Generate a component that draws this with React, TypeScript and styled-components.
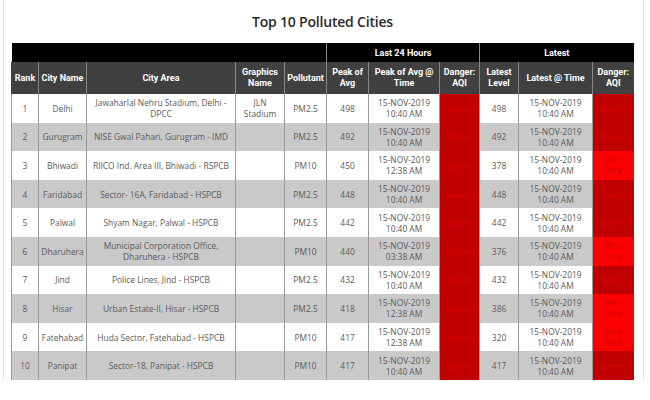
import React from 'react';
import styled, { createGlobalStyle } from 'styled-components';

type Level = 'severe' | 'veryPoor';

interface CityRow {
  rank: number;
  city: string;
  area: string;
  graphics?: string;
  pollutant: string;
  peak: number;
  peakTime: string;
  latest: number;
  latestTime: string;
  latestLevel: Level;
}

const rows: CityRow[] = [
  { rank: 1, city: 'Delhi', area: 'Jawaharlal Nehru Stadium, Delhi - DPCC', graphics: 'JLN Stadium', pollutant: 'PM2.5', peak: 498, peakTime: '10:40 AM', latest: 498, latestTime: '10:40 AM', latestLevel: 'severe' },
  { rank: 2, city: 'Gurugram', area: 'NISE Gwal Pahari, Gurugram - IMD', pollutant: 'PM2.5', peak: 492, peakTime: '10:40 AM', latest: 492, latestTime: '10:40 AM', latestLevel: 'severe' },
  { rank: 3, city: 'Bhiwadi', area: 'RIICO Ind. Area III, Bhiwadi - RSPCB', pollutant: 'PM10', peak: 450, peakTime: '12:38 AM', latest: 378, latestTime: '10:40 AM', latestLevel: 'veryPoor' },
  { rank: 4, city: 'Faridabad', area: 'Sector- 16A, Faridabad - HSPCB', pollutant: 'PM2.5', peak: 448, peakTime: '10:40 AM', latest: 448, latestTime: '10:40 AM', latestLevel: 'severe' },
  { rank: 5, city: 'Palwal', area: 'Shyam Nagar, Palwal - HSPCB', pollutant: 'PM2.5', peak: 442, peakTime: '10:40 AM', latest: 442, latestTime: '10:40 AM', latestLevel: 'severe' },
  { rank: 6, city: 'Dharuhera', area: 'Municipal Corporation Office, Dharuhera - HSPCB', pollutant: 'PM10', peak: 440, peakTime: '03:38 AM', latest: 376, latestTime: '10:40 AM', latestLevel: 'veryPoor' },
  { rank: 7, city: 'Jind', area: 'Police Lines, Jind - HSPCB', pollutant: 'PM2.5', peak: 432, peakTime: '10:40 AM', latest: 432, latestTime: '10:40 AM', latestLevel: 'severe' },
  { rank: 8, city: 'Hisar', area: 'Urban Estate-II, Hisar - HSPCB', pollutant: 'PM2.5', peak: 418, peakTime: '12:38 AM', latest: 386, latestTime: '10:40 AM', latestLevel: 'veryPoor' },
  { rank: 9, city: 'Fatehabad', area: 'Huda Sector, Fatehabad - HSPCB', pollutant: 'PM10', peak: 417, peakTime: '12:38 AM', latest: 320, latestTime: '10:40 AM', latestLevel: 'veryPoor' },
  { rank: 10, city: 'Panipat', area: 'Sector-18, Panipat - HSPCB', pollutant: 'PM10', peak: 417, peakTime: '10:40 AM', latest: 417, latestTime: '10:40 AM', latestLevel: 'severe' },
];

const colWidths = [27, 48, 149, 49, 42, 42, 71, 40, 39, 74, 41];

const GlobalStyle = createGlobalStyle`
  body {
    margin: 0;
    background: #fff;
    font-family: "Open Sans", sans-serif;
  }
`;

const Page = styled.div`
  box-sizing: border-box;
  width: 641px;
  height: 380px;
  margin-left: 3px;
  padding: 0 9px 0 7px;
  border-left: 1px solid #e4e4e4;
  border-right: 1px solid #e4e4e4;
`;

const Title = styled.h2`
  margin: 0;
  height: 43px;
  line-height: 43px;
  text-align: center;
  font-size: 14px;
  font-weight: 600;
  color: #2a2a2a;
  letter-spacing: -0.2px;
`;

const Table = styled.table`
  width: 622px;
  border-collapse: collapse;
  table-layout: fixed;
`;

const GroupRow = styled.tr`
  height: 19px;
  background: #000;
`;

const GroupCell = styled.th<{ $sep?: boolean }>`
  padding: 0;
  color: #fff;
  font-family: "Liberation Sans Narrow", "Roboto", sans-serif;
  font-size: 9px;
  font-weight: 700;
  border-left: ${(p) => (p.$sep ? '1px solid #8a8a8a' : 'none')};
`;

const HeadRow = styled.tr`
  height: 32px;
  background: #404040;
`;

const HeadCell = styled.th`
  padding: 0 1px;
  color: #fff;
  font-family: "Liberation Sans Narrow", "Roboto", sans-serif;
  font-size: 9px;
  line-height: 11px;
  font-weight: 700;
  text-align: center;
  white-space: nowrap;
  border-left: 1px solid #888;
  &:first-child {
    border-left: 1px solid #404040;
  }
`;

const BodyRow = styled.tr<{ $shade: boolean }>`
  height: 28.6px;
  background: ${(p) => (p.$shade ? '#c9c9c9' : '#fff')};
`;

const Cell = styled.td`
  padding: 0 1px;
  color: #5a5a5a;
  font-size: 8.4px;
  line-height: 11px;
  text-align: center;
  vertical-align: middle;
  border-left: 1px solid #999;
`;

const DangerCell = styled.td<{ $level: Level }>`
  padding: 0 1px;
  font-size: 8.4px;
  line-height: 11px;
  text-align: center;
  border-left: 1px solid #999;
  background: ${(p) => (p.$level === 'severe' ? '#c00000' : '#ff0000')};
  color: ${(p) => (p.$level === 'severe' ? '#dc0000' : '#cc0000')};
`;

const levelText: Record<Level, string> = { severe: 'Severe', veryPoor: 'Very Poor' };

export default function App() {
  return (
    <>
      <GlobalStyle />
      <Page>
        <Title>Top 10 Polluted Cities</Title>
        <Table>
          <colgroup>
            {colWidths.map((w, i) => (
              <col key={i} style={{ width: w }} />
            ))}
          </colgroup>
          <thead>
            <GroupRow>
              <GroupCell colSpan={5} />
              <GroupCell colSpan={3} $sep>Last 24 Hours</GroupCell>
              <GroupCell colSpan={3} $sep>Latest</GroupCell>
            </GroupRow>
            <HeadRow>
              <HeadCell>Rank</HeadCell>
              <HeadCell>City Name</HeadCell>
              <HeadCell>City Area</HeadCell>
              <HeadCell>Graphics<br />Name</HeadCell>
              <HeadCell>Pollutant</HeadCell>
              <HeadCell>Peak of<br />Avg</HeadCell>
              <HeadCell>Peak of Avg @<br />Time</HeadCell>
              <HeadCell>Danger:<br />AQI</HeadCell>
              <HeadCell>Latest<br />Level</HeadCell>
              <HeadCell>Latest @ Time</HeadCell>
              <HeadCell>Danger:<br />AQI</HeadCell>
            </HeadRow>
          </thead>
          <tbody>
            {rows.map((r, i) => (
              <BodyRow key={r.rank} $shade={i % 2 === 1}>
                <Cell>{r.rank}</Cell>
                <Cell>{r.city}</Cell>
                <Cell>{r.area}</Cell>
                <Cell>{r.graphics}</Cell>
                <Cell>{r.pollutant}</Cell>
                <Cell>{r.peak}</Cell>
                <Cell>15-NOV-2019<br />{r.peakTime}</Cell>
                <DangerCell $level="severe">Severe</DangerCell>
                <Cell>{r.latest}</Cell>
                <Cell>15-NOV-2019<br />{r.latestTime}</Cell>
                <DangerCell $level={r.latestLevel}>
                  {r.latestLevel === 'veryPoor' ? (
                    <>Very<br />Poor</>
                  ) : (
                    levelText[r.latestLevel]
                  )}
                </DangerCell>
              </BodyRow>
            ))}
          </tbody>
        </Table>
      </Page>
    </>
  );
}
